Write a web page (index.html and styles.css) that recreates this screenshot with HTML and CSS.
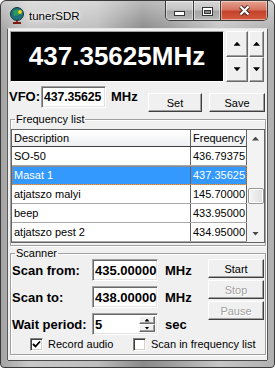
FILE: index.html
```html
<!DOCTYPE html>
<html lang="en">
<head>
  <meta charset="UTF-8" />
  <meta name="viewport" content="width=device-width, initial-scale=1.0"/>
  <title>tunerSDR</title>
  <link rel="stylesheet" href="styles.css">
</head>
<body>

  <div class="window">
    <div class="titlebar">
      <svg class="app-icon" width="16" height="18" viewBox="0 0 16 18">
        <rect x="7" y="11" width="2" height="6" fill="#c0281c"/>
        <rect x="4" y="16" width="8" height="2" fill="#7a1a10"/>
        <circle cx="8" cy="8" r="6.5" fill="#1f7078" stroke="#0d3a3f"/>
        <path d="M4 5 L9 3 L10 9 L5 10 Z" fill="#2e9a5a"/>
        <circle cx="11" cy="6" r="2" fill="#f2d21b"/>
      </svg>
      <span class="title">tunerSDR</span>
      <div class="caption">
        <div class="cap-btn cap-min">
          <svg width="11" height="5" viewBox="0 0 11 5"><rect x="0.5" y="0.5" width="10" height="4" fill="#fff" stroke="#333"/></svg>
        </div>
        <div class="cap-btn cap-max">
          <svg width="11" height="9" viewBox="0 0 11 9"><rect x="0.5" y="0.5" width="10" height="8" fill="#fff" stroke="#333"/><rect x="2.5" y="3.5" width="6" height="3" fill="#8a8a8a" stroke="#333"/></svg>
        </div>
        <div class="cap-btn cap-close">
          <svg width="13" height="11" viewBox="0 0 13 11">
            <path d="M2.5 1.5 L10.5 9.5 M10.5 1.5 L2.5 9.5" stroke="#3a2622" stroke-width="4"/>
            <path d="M2.5 1.5 L10.5 9.5 M10.5 1.5 L2.5 9.5" stroke="#fff" stroke-width="2.2"/>
          </svg>
        </div>
      </div>
    </div>

    <div class="client">
      <!-- big frequency readout -->
      <div class="display-row">
        <div class="display">437.35625MHz</div>
        <div class="spin">
          <div class="spin-btn"><span class="tri up"></span></div>
          <div class="spin-btn"><span class="tri down"></span></div>
        </div>
        <div class="spin narrow">
          <div class="spin-btn"><span class="tri up"></span></div>
          <div class="spin-btn"><span class="tri down"></span></div>
        </div>
      </div>

      <div class="vfo-row">
        <span class="lbl vfo-lbl">VFO:</span>
        <input class="field vfo-field" type="text" value="437.35625" />
        <span class="lbl unit">MHz</span>
        <button class="btn set-btn">Set</button>
        <button class="btn save-btn">Save</button>
      </div>

      <!-- Frequency list -->
      <fieldset class="group freq-group">
        <legend>Frequency list</legend>
        <div class="listview">
          <div class="lv-main">
            <div class="lv-row lv-head"><div class="c1">Description</div><div class="c2">Frequency</div></div>
            <div class="lv-row"><div class="c1">SO-50</div><div class="c2">436.79375</div></div>
            <div class="lv-row sel"><div class="c1">Masat 1</div><div class="c2">437.35625</div></div>
            <div class="lv-row"><div class="c1">atjatszo malyi</div><div class="c2">145.70000</div></div>
            <div class="lv-row"><div class="c1">beep</div><div class="c2">433.95000</div></div>
            <div class="lv-row"><div class="c1">atjatszo pest 2</div><div class="c2">434.95000</div></div>
          </div>
          <div class="vscroll">
            <div class="sb-arrow"><span class="tri up small"></span></div>
            <div class="sb-thumb"></div>
            <div class="sb-arrow down"><span class="tri down small"></span></div>
          </div>
        </div>
      </fieldset>

      <!-- Scanner -->
      <fieldset class="group scan-group">
        <legend>Scanner</legend>
        <div class="scan-body">
          <div class="scan-grid">
            <span class="lbl">Scan from:</span>
            <input class="field" type="text" value="435.00000" />
            <span class="lbl unit">MHz</span>

            <span class="lbl">Scan to:</span>
            <input class="field" type="text" value="438.00000" />
            <span class="lbl unit">MHz</span>

            <span class="lbl">Wait period:</span>
            <div class="field spin-field">
              <input type="text" value="5" />
              <div class="mini-spin">
                <div class="spin-btn"><span class="tri up tiny"></span></div>
                <div class="spin-btn"><span class="tri down tiny"></span></div>
              </div>
            </div>
            <span class="lbl unit">sec</span>
          </div>
          <div class="scan-btns">
            <button class="btn">Start</button>
            <button class="btn" disabled>Stop</button>
            <button class="btn" disabled>Pause</button>
          </div>
        </div>
        <div class="checks">
          <label class="check first"><span class="box">
            <svg width="9" height="9" viewBox="0 0 9 9"><path d="M1 4 L3.5 6.5 L8 1.5" fill="none" stroke="#000" stroke-width="1.8"/></svg>
          </span>Record audio</label>
          <label class="check"><span class="box"></span>Scan in frequency list</label>
        </div>
      </fieldset>
    </div>
  </div>

</body>
</html>
```

FILE: styles.css
```css
* {
  box-sizing: border-box;
}

body {
  margin: 0;
  width: 275px;
  height: 368px;
  overflow: hidden;
  font-family: "Liberation Sans", Arial, sans-serif;
  font-size: 11px;
  color: #000;
  background: #fff;
}

/* window frame */
.window {
  width: 275px;
  height: 368px;
  display: flex;
  flex-direction: column;
  padding: 0 7px 7px 7px;
  border: 1px solid #3a3a3a;
  border-radius: 6px 6px 4px 4px;
  background:
    linear-gradient(180deg, rgba(255,255,255,0.4), rgba(255,255,255,0) 30px),
    linear-gradient(90deg, #a4a4a4 0%, #c8c8c8 10%, #bebebe 35%, #8a8a8a 52%, #9c9c9c 62%, #c6c6c6 80%, #b0b0b0 100%);
}

.titlebar {
  height: 28px;
  display: flex;
  align-items: flex-start;
}

.app-icon {
  margin: 5px 0 0 1px;
}

.title {
  margin: 8px 0 0 4px;
  font-size: 11.5px;
  line-height: 14px;
  text-shadow: 0 0 6px #fff, 0 0 3px #fff;
}

.caption {
  margin-left: auto;
  margin-right: -1px;
  display: flex;
  width: 103px;
  height: 20px;
  border: 1px solid #3b3b3b;
  border-top: none;
  border-radius: 0 0 5px 5px;
  overflow: hidden;
}

.cap-btn {
  display: flex;
  align-items: flex-end;
  justify-content: center;
  padding-bottom: 4px;
  box-shadow: inset 0 0 0 1px rgba(255,255,255,0.45);
}

.cap-min,
.cap-max {
  width: 27px;
  background: linear-gradient(#d8d8d8 0%, #c4c4c4 45%, #a6a6a6 55%, #b6b6b6 100%);
}

.cap-max {
  border-left: 1px solid #3b3b3b;
}

.cap-close {
  flex: 1;
  border-left: 1px solid #3b3b3b;
  background: linear-gradient(#e4a492 0%, #d67460 45%, #c4432a 55%, #d45a3e 100%);
}

/* client area */
.client {
  flex: 1;
  display: flex;
  flex-direction: column;
  background: #f0f0f0;
  box-shadow: 0 -1px 0 #e6e6e6, 0 1px 0 #4a4a4a, -1px 0 0 #5a5a5a, 1px 0 0 #5a5a5a;
}

.display-row {
  display: flex;
  height: 51px;
  margin: 2px 3px 0 2px;
}

.display {
  width: 214px;
  display: flex;
  align-items: center;
  justify-content: center;
  background: #000;
  color: #fff;
  font-size: 26px;
  font-weight: bold;
  border: 1px solid;
  border-color: #a0a0a0 #fff #fff #a0a0a0;
}

.spin {
  width: 22px;
  margin-left: 2px;
  display: flex;
  flex-direction: column;
}

.spin.narrow {
  width: 15px;
  margin-left: 1px;
}

.spin-btn {
  flex: 1;
  display: flex;
  align-items: center;
  justify-content: center;
  background: #f0f0f0;
  border: 1px solid;
  border-color: #fff #696969 #696969 #fff;
  box-shadow: inset -1px -1px 0 #a0a0a0;
}

.tri {
  display: block;
  width: 7px;
  height: 4px;
  background: #000;
}

.tri.up {
  clip-path: polygon(50% 0, 100% 100%, 0 100%);
}

.tri.down {
  clip-path: polygon(0 0, 100% 0, 50% 100%);
}

.tri.small {
  background: #4a4a4a;
}

.tri.tiny {
  width: 5px;
  height: 3px;
}

/* VFO row */
.vfo-row {
  display: flex;
  align-items: flex-start;
  height: 26px;
  margin-top: 4px;
  padding-left: 1px;
}

.lbl {
  font-size: 13px;
  font-weight: bold;
  line-height: 22px;
  white-space: nowrap;
}

.vfo-lbl {
  width: 32px;
}

.field {
  width: 66px;
  height: 22px;
  margin: 0;
  padding: 0 0 0 2px;
  background: #fff;
  border: 1px solid;
  border-color: #a0a0a0 #fff #fff #a0a0a0;
  box-shadow: inset 1px 1px 0 #696969, inset -1px -1px 0 #e3e3e3;
  font-family: "Liberation Sans", Arial, sans-serif;
  font-size: 13px;
  font-weight: bold;
  color: #000;
  outline: none;
}

.vfo-field {
  width: 65px;
  padding-left: 2px;
  padding-right: 0;
  font-size: 12.3px;
  letter-spacing: -0.1px;
}

.vfo-row .unit {
  margin-left: 5px;
  width: 27px;
}

.btn {
  height: 19px;
  padding: 0;
  background: #f0f0f0;
  border: 1px solid;
  border-color: #fff #404040 #404040 #fff;
  box-shadow: inset -1px -1px 0 #a0a0a0;
  font-family: "Liberation Sans", Arial, sans-serif;
  font-size: 11px;
  color: #000;
}

.btn:disabled {
  color: #a0a0a0;
  text-shadow: 1px 1px 0 #fff;
}

.set-btn {
  width: 54px;
  margin: 7px 0 0 10px;
}

.save-btn {
  width: 56px;
  margin: 7px 0 0 7px;
}

/* group boxes */
.group {
  margin: 1px 1px 0 2px;
  padding: 4px 0 2px 0;
  min-width: 0;
  border: 1px solid #a0a0a0;
  box-shadow: inset 1px 1px 0 #fff, 1px 1px 0 #fff;
}

.group legend {
  margin-left: 4px;
  padding: 0 1px;
  font-size: 11px;
  line-height: 12px;
}

.listview {
  display: flex;
  height: 114px;
  border: 1px solid #646464;
  background: #fff;
}

.lv-main {
  width: 235px;
}

.lv-row {
  display: flex;
  height: 19px;
  line-height: 18px;
  border-bottom: 1px solid #a8a8a8;
  white-space: nowrap;
}

.lv-head {
  height: 17px;
  line-height: 16px;
  background: linear-gradient(#ffffff, #eeeff1);
  border-bottom: 1px solid #404040;
}

.c1 {
  width: 179px;
  padding-left: 2px;
  border-right: 1px solid #646464;
}

.c2 {
  width: 56px;
  padding-left: 2px;
  border-right: 1px solid #646464;
  overflow: hidden;
}

.lv-row.sel {
  background: #3399ff;
  color: #fff;
  outline: 1px dotted #e07a20;
  outline-offset: -1px;
}

.vscroll {
  width: 17px;
  display: flex;
  flex-direction: column;
  align-items: center;
  background: #f3f3f3;
}

.sb-arrow {
  width: 100%;
  height: 17px;
  display: flex;
  align-items: center;
  justify-content: center;
}

.sb-arrow.down {
  margin-top: auto;
}

.sb-thumb {
  width: 16px;
  height: 16px;
  margin-top: 41px;
  border: 1px solid #979797;
  border-radius: 2px;
  background: linear-gradient(90deg, #f6f6f6, #dedede);
  box-shadow: inset 0 0 0 1px #fff;
}

/* scanner */
.scan-group {
  padding: 0 0 3px 0;
}

.scan-body {
  display: flex;
}

.scan-grid {
  display: grid;
  grid-template-columns: 80px 66px auto;
  grid-auto-rows: 22px;
  row-gap: 5px;
  margin-left: 1px;
}

.scan-grid .lbl {
  padding-top: 1px;
}

.scan-grid .unit {
  margin-left: 7px;
}

.spin-field {
  display: flex;
  padding: 2px 2px 2px 2px;
}

.spin-field input {
  flex: 1;
  min-width: 0;
  border: none;
  padding: 0;
  margin: 0;
  font-family: "Liberation Sans", Arial, sans-serif;
  font-size: 13px;
  font-weight: bold;
  background: transparent;
  outline: none;
}

.mini-spin {
  width: 16px;
  display: flex;
  flex-direction: column;
}

.scan-btns {
  width: 56px;
  margin-left: auto;
  margin-right: 1px;
  display: flex;
  flex-direction: column;
  gap: 2px;
}

.checks {
  display: flex;
  margin-top: 3px;
  padding-left: 19px;
  height: 13px;
}

.check {
  display: flex;
  align-items: center;
  gap: 5px;
  line-height: 13px;
  white-space: nowrap;
}

.check.first {
  width: 103px;
}

.box {
  width: 13px;
  height: 13px;
  display: flex;
  align-items: center;
  justify-content: center;
  background: #fff;
  border: 1px solid;
  border-color: #808080 #fff #fff #808080;
  box-shadow: inset 1px 1px 0 #404040, inset -1px -1px 0 #d4d0c8;
}
```
